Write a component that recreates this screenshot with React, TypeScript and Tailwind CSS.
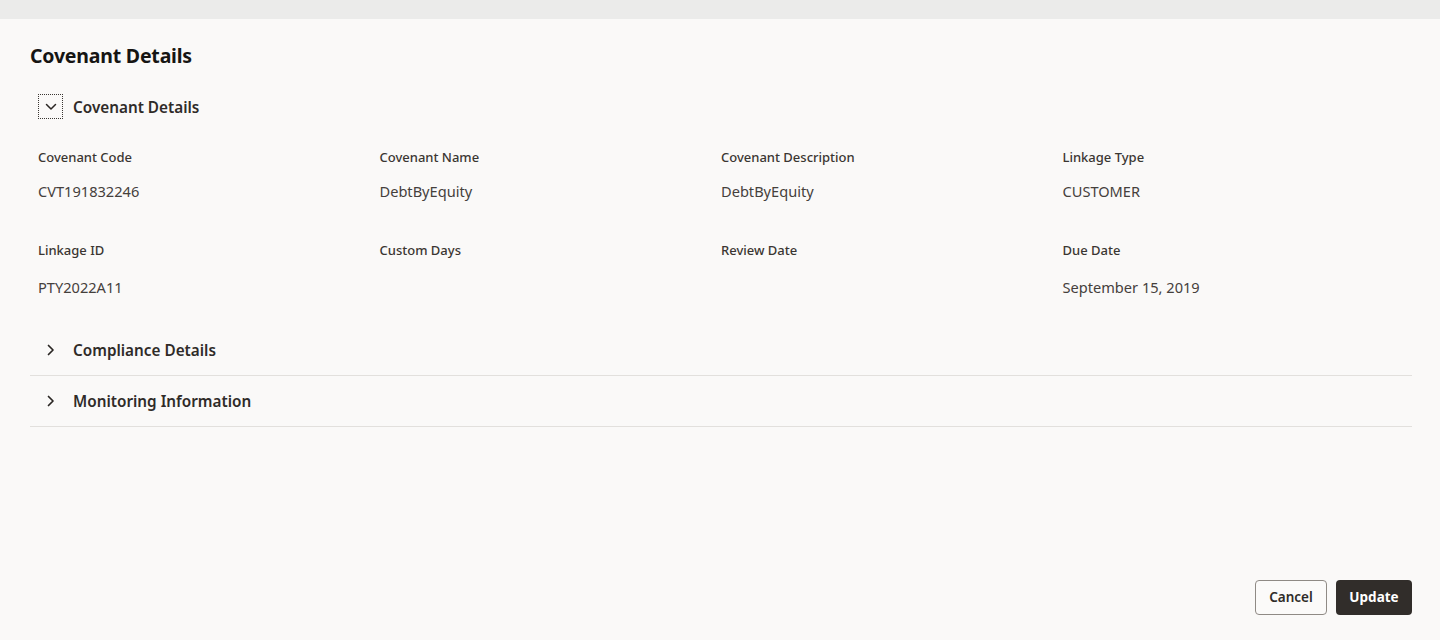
import React from "react";

const fields = [
  { label: "Covenant Code", value: "CVT191832246" },
  { label: "Covenant Name", value: "DebtByEquity" },
  { label: "Covenant Description", value: "DebtByEquity" },
  { label: "Linkage Type", value: "CUSTOMER" },
  { label: "Linkage ID", value: "PTY2022A11" },
  { label: "Custom Days", value: "" },
  { label: "Review Date", value: "" },
  { label: "Due Date", value: "September 15, 2019" },
];

function ChevronDown() {
  return (
    <svg width="12" height="8" viewBox="0 0 12 8" fill="none">
      <path d="M1.5 1.5 L6 6 L10.5 1.5" stroke="#2a2623" strokeWidth="1.5" strokeLinecap="round" strokeLinejoin="round" />
    </svg>
  );
}

function ChevronRight() {
  return (
    <svg width="8" height="12" viewBox="0 0 8 12" fill="none">
      <path d="M1.5 1.5 L6 6 L1.5 10.5" stroke="#2a2623" strokeWidth="1.7" strokeLinecap="round" strokeLinejoin="round" />
    </svg>
  );
}

export default function App() {
  return (
    <div
      className="w-[1440px] h-[640px] bg-[#faf9f8] overflow-hidden"
      style={{ fontFamily: '"Noto Sans", "Open Sans", sans-serif' }}
    >
      <div className="h-[19px] bg-[#ebebea]" />
      <div className="px-[30px]">
        <h1 className="pt-[23px] text-[19.5px] leading-[28px] font-bold text-[#161513] tracking-[-0.2px]">
          Covenant Details
        </h1>

        <div className="mt-[24px] flex items-center h-[25px]">
          <div className="ml-[8px] w-[25px] h-[25px] border border-dotted border-[#3a3632] flex items-center justify-center">
            <ChevronDown />
          </div>
          <span className="ml-[10px] text-[15.3px] leading-[24px] font-semibold text-[#2f2b28]">
            Covenant Details
          </span>
        </div>

        <div className="mt-[29px] ml-[8px] w-[1366px] grid grid-cols-4 gap-y-[39px]">
          {fields.map((f, i) => (
            <div key={f.label} className="flex flex-col">
              <div className="text-[13px] leading-[18px] font-medium text-[#3a3632]">{f.label}</div>
              <div
                className={
                  (i < 4 ? "mt-[14px]" : "mt-[17px]") +
                  " h-[22px] text-[14.6px] leading-[22px] text-[#45403c]"
                }
              >
                {f.value}
              </div>
            </div>
          ))}
        </div>

        <div className="mt-[27px] w-[1382px]">
          {["Compliance Details", "Monitoring Information"].map((t) => (
            <div key={t} className="h-[51px] flex items-center border-b border-[#e2e0dd]">
              <div className="w-[25px] ml-[8px] flex items-center justify-center">
                <ChevronRight />
              </div>
              <span className="ml-[10px] text-[15.3px] leading-[24px] font-semibold text-[#2f2b28]">{t}</span>
            </div>
          ))}
        </div>

        <div className="mt-[153px] w-[1382px] flex justify-end gap-[9px]">
          <button className="w-[72px] h-[35px] rounded-[4px] border border-[#8f8a85] bg-[#fbfaf9] text-[13.5px] font-semibold text-[#2f2b28]">
            Cancel
          </button>
          <button className="w-[76px] h-[35px] rounded-[4px] bg-[#312d2a] text-[13.5px] font-bold text-white">
            Update
          </button>
        </div>
      </div>
    </div>
  );
}
